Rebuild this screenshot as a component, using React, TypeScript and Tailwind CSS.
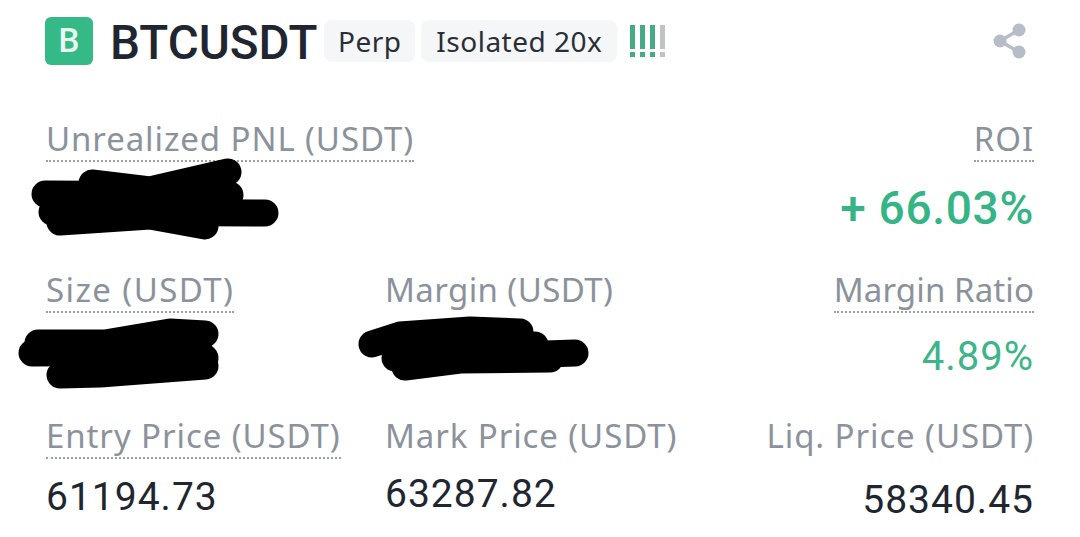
const labelFont = "font-['Noto_Sans',sans-serif]";
const numFont = "font-['Roboto',sans-serif]";

function Label({ text, dotted = true, spacing = "tracking-[0.9px]" }: { text: string; dotted?: boolean; spacing?: string }) {
  return (
    <span
      className={`inline-block whitespace-nowrap text-[33px] leading-[42px] text-[#8b929b] ${spacing} ${labelFont} ${
        dotted ? "border-b-2 border-dotted border-[#9a9fa6]" : "border-b-2 border-transparent"
      }`}
    >
      {text}
    </span>
  );
}

function Tag({ text, width }: { text: string; width: string }) {
  return (
    <span className={`flex h-[42px] items-center justify-center rounded-lg bg-[#f5f6f7] text-[28px] tracking-[0.5px] text-[#2a2f37] ${width} ${labelFont}`}>
      {text}
    </span>
  );
}

function Bar({ on = true }: { on?: boolean }) {
  const color = on ? "bg-[#46aa84]" : "bg-[#c0c3c6]";
  return (
    <div className="flex w-[5px] flex-col gap-[3px]">
      <div className={`h-6 ${color}`} />
      <div className={`h-[5px] ${color}`} />
    </div>
  );
}

export default function App() {
  return (
    <div className={`relative h-[537px] w-[1080px] overflow-hidden bg-white px-[46px] pt-[17px] ${numFont}`}>
      <div className="flex h-12 items-center">
        <div className="-ml-px flex h-12 w-12 items-center justify-center rounded-md bg-[#35b987] text-[33px] font-medium text-[#e8f8f1]">
          B
        </div>
        <h1 className="ml-[17px] mt-[5px] text-[47.5px] font-medium leading-none text-[#1f2630]">BTCUSDT</h1>
        <div className="ml-[7px] flex gap-[6px]">
          <Tag text="Perp" width="w-[91px]" />
          <Tag text="Isolated 20x" width="w-[196px]" />
        </div>
        <div className="ml-[13px] flex gap-[5px]">
          <Bar />
          <Bar />
          <Bar />
          <Bar on={false} />
        </div>
        <svg className="ml-auto mr-[7px] h-[36px] w-[34px]" viewBox="0 0 34 36" fill="#b7bdc6">
          <circle cx="26" cy="7" r="6.5" />
          <circle cx="7" cy="18" r="6.5" />
          <circle cx="26" cy="29" r="6.5" />
          <path d="M7 18 26 7M7 18l19 11" stroke="#b7bdc6" strokeWidth="3.5" />
        </svg>
      </div>

      <div className="mt-[53px] grid grid-cols-[339px_1fr_auto] items-start">
        <div className="h-[44px]">
          <Label text="Unrealized PNL (USDT)" />
        </div>
        <div />
        <div className="text-right">
          <Label text="ROI" />
        </div>
        <div className="h-[107px]" />
        <div />
        <div className="pt-[22px] text-right text-[46px] font-medium leading-[48px] tracking-[0.7px] text-[#35b586]">
          + 66.03%
        </div>

        <div className="h-[44px]">
          <Label text="Size (USDT)" spacing="tracking-[1.4px]" />
        </div>
        <div>
          <Label text="Margin (USDT)" dotted={false} spacing="tracking-[0.4px]" />
        </div>
        <div className="text-right">
          <Label text="Margin Ratio" spacing="tracking-[0.1px]" />
        </div>
        <div className="h-[102px]" />
        <div />
        <div className="pt-[22px] text-right text-[40px] leading-[44px] tracking-[1px] text-[#3cb58a]">4.89%</div>

        <div>
          <Label text="Entry Price (USDT)" />
        </div>
        <div>
          <Label text="Mark Price (USDT)" dotted={false} />
        </div>
        <div className="text-right">
          <Label text="Liq. Price (USDT)" dotted={false} />
        </div>
        <div className="pt-[16px] text-[39px] leading-[44px] tracking-[1px] text-[#1f2630]">61194.73</div>
        <div className="pt-[13px] text-[39px] leading-[44px] tracking-[1px] text-[#1f2630]">63287.82</div>
        <div className="pt-[19px] text-right text-[39px] leading-[44px] tracking-[1px] text-[#1f2630]">58340.45</div>
      </div>

      {/* hand-drawn redaction scribbles */}
      <svg className="pointer-events-none absolute left-0 top-0 h-[537px] w-[1080px]" viewBox="0 0 1080 537" fill="none" stroke="#000" strokeLinecap="round" strokeLinejoin="round" strokeWidth="27">
        <path d="M92 183 150 190 228 172" />
        <path d="M45 194 230 195" />
        <path d="M52 212 265 213" />
        <path d="M60 222 150 216 205 226" />
        <path d="M38 343 105 343 170 332 205 334" />
        <path d="M32 353 200 352" />
        <path d="M60 375 100 374 205 366" />
        <path d="M105 372 205 358" />
        <path d="M372 344 400 335 470 330 520 332" />
        <path d="M395 358 460 357 575 353" />
        <path d="M405 367 460 360 550 359" />
        <path d="M400 350 535 345" />
      </svg>
    </div>
  );
}
